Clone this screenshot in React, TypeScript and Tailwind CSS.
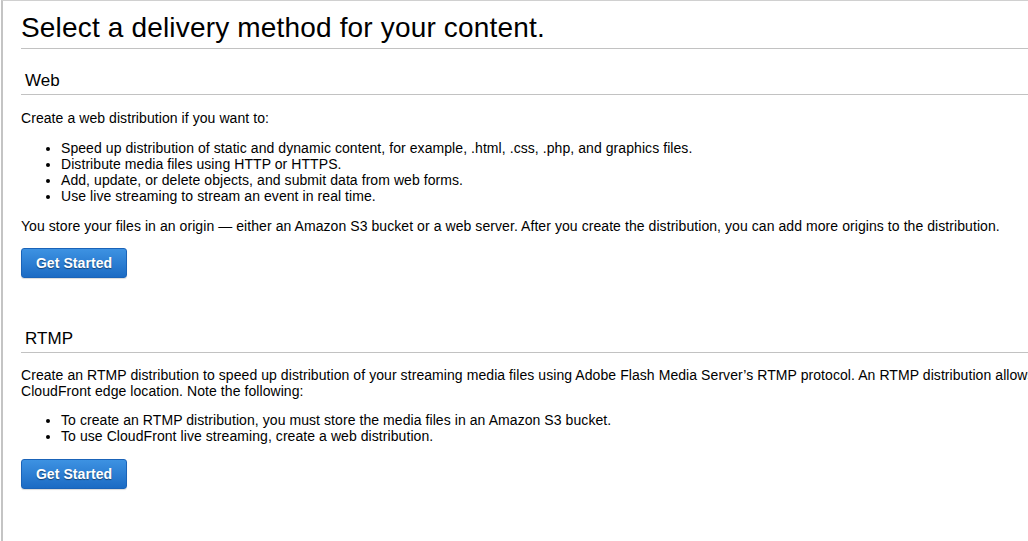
import React from "react";

function GetStarted() {
  return (
    <button className="h-[30px] w-[106px] rounded-[3px] border border-[#1a63b8] bg-gradient-to-b from-[#3d92e2] to-[#1b6bc4] text-[14px] font-bold text-white [text-shadow:0_1px_1px_rgba(0,0,0,0.45)] shadow-[0_1px_1px_rgba(0,0,0,0.15)]">
      Get Started
    </button>
  );
}

export default function App() {
  return (
    <div className="h-[541px] w-[1028px] overflow-hidden bg-white" style={{ fontFamily: '"Liberation Sans", Arial, sans-serif' }}>
      <div className="ml-[1px] h-full w-[1700px] border-l-2 border-t border-l-[#c4c4c4] border-t-[#d0d0d0] pl-[18px] text-[#000] tracking-[0.07px]">
        <h1 className="w-[1010px] border-b border-[#c2c2c2] pt-[11px] pb-[4px] text-[28px] leading-[32px] font-normal tracking-[0.17px]">
          Select a delivery method for your content.
        </h1>
        <h2 className="mt-[22px] w-[1010px] border-b border-[#c2c2c2] pl-[4px] pb-[3px] text-[17px] leading-[20px]">Web</h2>
        <p className="mt-[15px] text-[14px] leading-[16px]">Create a web distribution if you want to:</p>
        <ul className="mt-[14px] list-disc pl-[40px] text-[14px] leading-[16px]">
          <li>Speed up distribution of static and dynamic content, for example, .html, .css, .php, and graphics files.</li>
          <li>Distribute media files using HTTP or HTTPS.</li>
          <li>Add, update, or delete objects, and submit data from web forms.</li>
          <li>Use live streaming to stream an event in real time.</li>
        </ul>
        <p className="mt-[14px] text-[14px] leading-[16px]">
          You store your files in an origin — either an Amazon S3 bucket or a web server. After you create the distribution, you can add more origins to the distribution.
        </p>
        <div className="mt-[14px]">
          <GetStarted />
        </div>
        <h2 className="mt-[51px] w-[1010px] border-b border-[#c2c2c2] pl-[4px] pb-[3px] text-[17px] leading-[20px]">RTMP</h2>
        <p className="mt-[14px] w-[1610px] text-[14px] leading-[16px]">
          Create an RTMP distribution to speed up distribution of your streaming media files using Adobe Flash Media Server’s RTMP protocol. An RTMP distribution allows an end user to begin playing a media file before the file has finished downloading from a CloudFront edge location. Note the following:
        </p>
        <ul className="mt-[13px] list-disc pl-[40px] text-[14px] leading-[16px]">
          <li>To create an RTMP distribution, you must store the media files in an Amazon S3 bucket.</li>
          <li>To use CloudFront live streaming, create a web distribution.</li>
        </ul>
        <div className="mt-[15px]">
          <GetStarted />
        </div>
      </div>
    </div>
  );
}
